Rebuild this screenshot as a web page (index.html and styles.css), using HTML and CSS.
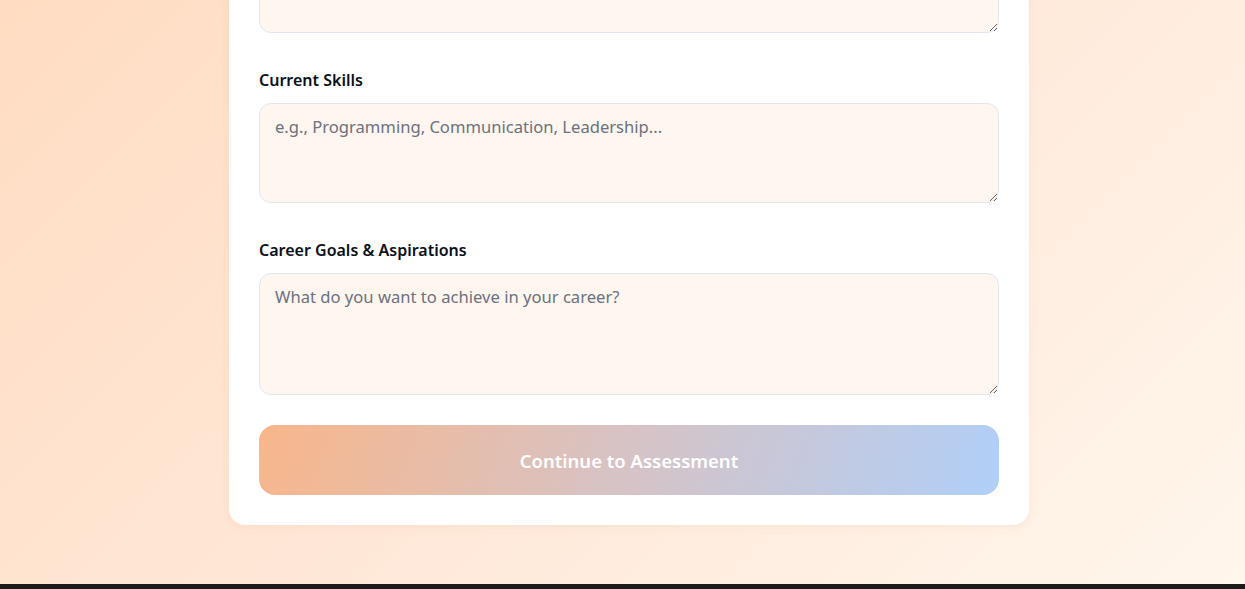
FILE: index.html
```html
<!DOCTYPE html>
<html lang="en">
<head>
<meta charset="utf-8">
<title>Career Assessment</title>
<link rel="stylesheet" href="styles.css">
</head>
<body>
<div class="page">
  <form class="card">
    <div class="group first">
      <textarea class="field f1"></textarea>
    </div>
    <div class="group">
      <label class="label" for="skills">Current Skills</label>
      <textarea id="skills" class="field f2" placeholder="e.g., Programming, Communication, Leadership..."></textarea>
    </div>
    <div class="group last">
      <label class="label" for="goals">Career Goals &amp; Aspirations</label>
      <textarea id="goals" class="field f3" placeholder="What do you want to achieve in your career?"></textarea>
    </div>
    <button type="button" class="submit">Continue to Assessment</button>
  </form>
</div>
<div class="bottom-bar"></div>
</body>
</html>
```

FILE: styles.css
```css
html, body {
  margin: 0;
  padding: 0;
  height: 589px;
  overflow: hidden;
}
body {
  font-family: "Noto Sans", "Open Sans", sans-serif;
  background: #1c1b1b;
}
.page {
  height: 584px;
  box-sizing: border-box;
  padding-left: 13px;
  background: linear-gradient(135deg, #ffdcc2 0%, #ffe8d8 50%, #fff6ec 100%);
  display: flex;
  justify-content: center;
  align-items: flex-start;
  overflow: hidden;
}
.card {
  width: 800px;
  box-sizing: border-box;
  margin-top: -67px;
  padding: 0 30px 30px;
  background: #ffffff;
  border-radius: 0 0 16px 16px;
  box-shadow: 0 2px 10px rgba(200, 140, 100, 0.10);
  display: flex;
  flex-direction: column;
}
.group {
  display: flex;
  flex-direction: column;
  margin-bottom: 35px;
}
.group.last {
  margin-bottom: 30px;
}
.label {
  font-size: 16px;
  font-weight: 600;
  color: #0b0f19;
  line-height: 24px;
  margin-bottom: 11px;
}
.field {
  box-sizing: border-box;
  width: 100%;
  font-family: inherit;
  font-size: 16.6px;
  line-height: 24px;
  padding: 11px 15px;
  border: 1px solid #e2e6ee;
  border-radius: 12px;
  background: #fff6ef;
  color: #111827;
  resize: vertical;
  outline: none;
}
.field::placeholder {
  color: #6b7280;
}
.f1 { height: 100px; }
.f2 { height: 100px; }
.f3 { height: 122px; }
.submit {
  height: 70px;
  border: none;
  border-radius: 16px;
  background: linear-gradient(110deg, #f8b68a 0%, #d6c3c6 50%, #b0cff8 100%);
  color: #ffffff;
  font-family: inherit;
  font-size: 18.5px;
  font-weight: 600;
  cursor: pointer;
}
.bottom-bar {
  height: 5px;
  background: #1c1b1b;
}
```
